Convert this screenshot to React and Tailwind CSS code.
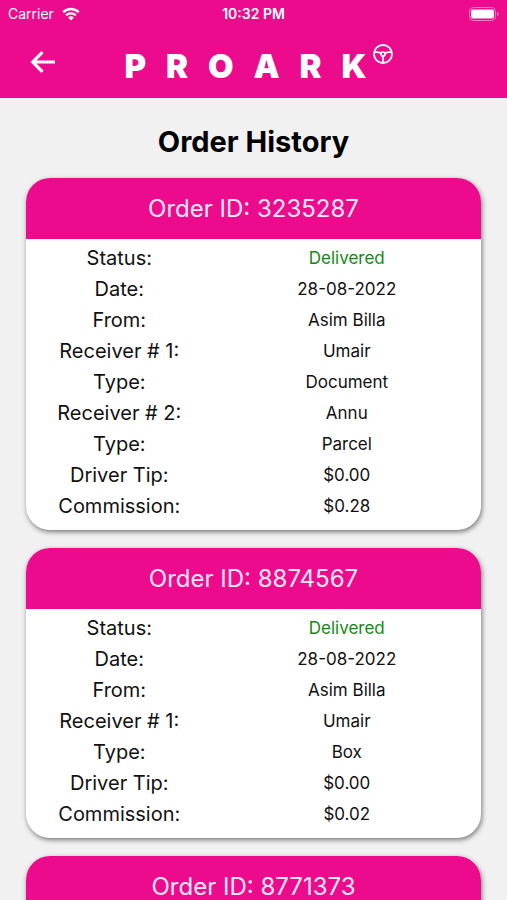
// Order history screen - lists past deliveries as cards under the app header

const orders = [
  {
    id: '3235287',
    rows: [
      { label: 'Status:', value: 'Delivered', highlight: true },
      { label: 'Date:', value: '28-08-2022' },
      { label: 'From:', value: 'Asim Billa' },
      { label: 'Receiver # 1:', value: 'Umair' },
      { label: 'Type:', value: 'Document' },
      { label: 'Receiver # 2:', value: 'Annu' },
      { label: 'Type:', value: 'Parcel' },
      { label: 'Driver Tip:', value: '$0.00' },
      { label: 'Commission:', value: '$0.28' },
    ],
  },
  {
    id: '8874567',
    rows: [
      { label: 'Status:', value: 'Delivered', highlight: true },
      { label: 'Date:', value: '28-08-2022' },
      { label: 'From:', value: 'Asim Billa' },
      { label: 'Receiver # 1:', value: 'Umair' },
      { label: 'Type:', value: 'Box' },
      { label: 'Driver Tip:', value: '$0.00' },
      { label: 'Commission:', value: '$0.02' },
    ],
  },
  { id: '8771373', rows: [] },
];

function WifiIcon() {
  return (
    <svg width="18" height="14" viewBox="0 0 20 15" fill="none" aria-hidden="true">
      <path d="M1.4 5.6a12 12 0 0 1 17.2 0" stroke="currentColor" strokeWidth="2.6" />
      <path d="M4.5 9a7.8 7.8 0 0 1 11 0" stroke="currentColor" strokeWidth="2.4" />
      <path d="M10 14.6 6.8 11.3a4.5 4.5 0 0 1 6.4 0Z" fill="currentColor" />
    </svg>
  );
}

function BatteryIcon() {
  return (
    <svg width="30" height="14" viewBox="0 0 30 14" fill="none" aria-hidden="true">
      <rect x="0.5" y="0.5" width="26" height="13" rx="4" stroke="currentColor" strokeOpacity="0.45" />
      <rect x="2" y="2.5" width="23" height="9" rx="2" fill="currentColor" />
      <path d="M28 5v4c1-.4 1.6-1.1 1.6-2S29 5.4 28 5Z" fill="currentColor" fillOpacity="0.5" />
    </svg>
  );
}

function BackIcon() {
  return (
    <svg width="26" height="24" viewBox="0 0 26 24" fill="none" aria-hidden="true">
      <path d="M12.500 2.200 2.700 12l9.800 9.800M2.700 12H25" stroke="currentColor" strokeWidth="3.2" />
    </svg>
  );
}

function WheelIcon() {
  return (
    <svg width="20" height="20" viewBox="0 0 20 20" fill="none" stroke="currentColor" aria-hidden="true">
      <circle cx="10" cy="10" r="9" strokeWidth="1.8" />
      <circle cx="10" cy="10" r="2" strokeWidth="1.7" />
      <path d="M1.500 8.200C5 7.600 6.500 8.400 8.200 9.200M18.500 8.200C15 7.600 13.500 8.400 11.800 9.200M10 12v7" strokeWidth="1.8" />
    </svg>
  );
}

function StatusBar() {
  return (
    <div className="grid h-7 grid-cols-3 items-center px-2 text-sm">
      <div className="flex items-center gap-2">
        <span>Carrier</span>
        <WifiIcon />
      </div>
      <span className="text-center font-semibold">10:32 PM</span>
      <div className="flex justify-end">
        <BatteryIcon />
      </div>
    </div>
  );
}

function Logo() {
  return (
    <div className="flex items-start text-white" role="img" aria-label="PROARK">
      <div className="flex w-[242px] justify-between pt-2 text-[33px] leading-9 font-black">
        {'PROARK'.split('').map((letter, i) => (
          <span key={i}>{letter}</span>
        ))}
      </div>
      <div className="ml-[6px] pt-1">
        <WheelIcon />
      </div>
    </div>
  );
}

function OrderCard({ order }) {
  return (
    <section className="overflow-hidden rounded-3xl bg-white shadow-[1px_2px_5px_rgba(0,0,0,0.5)]">
      <h2 className="bg-[#ec0b8c] pt-[17px] pb-4 text-center text-2xl leading-7 font-normal text-[#ffe6f5]">
        Order ID: {order.id}
      </h2>
      <div className="pt-[3px] pb-[9px]">
        <table className="w-full table-fixed text-center">
          <tbody>
            {order.rows.map((row, i) => (
              <tr key={i} className="h-[31px]">
                <th scope="row" className="w-[41%] text-xl leading-7 font-normal">
                  {row.label}
                </th>
                <td className={row.highlight ? 'text-[17px] leading-7 text-[#128a12]' : 'text-[17px] leading-7'}>
                  {row.value}
                </td>
              </tr>
            ))}
          </tbody>
        </table>
      </div>
    </section>
  );
}

function App() {
  return (
    <div className="min-h-screen bg-[#f1f1f1] font-[Inter,sans-serif] text-[#111111]">
      <header className="bg-[#ec0b8c] text-white">
        <StatusBar />
        <div className="grid h-[70px] grid-cols-[1fr_auto_1fr] items-start pt-3 pr-5 pl-[30px]">
          <button type="button" aria-label="Back" className="mt-[10px] w-7">
            <BackIcon />
          </button>
          <Logo />
        </div>
      </header>

      <main className="px-[26px]">
        <h1 className="pt-6 pb-4 text-center text-[29px] leading-10 font-bold text-black">
          Order History
        </h1>
        <div className="flex flex-col gap-[18px]">
          {orders.map((order) => (
            <OrderCard key={order.id} order={order} />
          ))}
        </div>
      </main>
    </div>
  );
}

export default App;
